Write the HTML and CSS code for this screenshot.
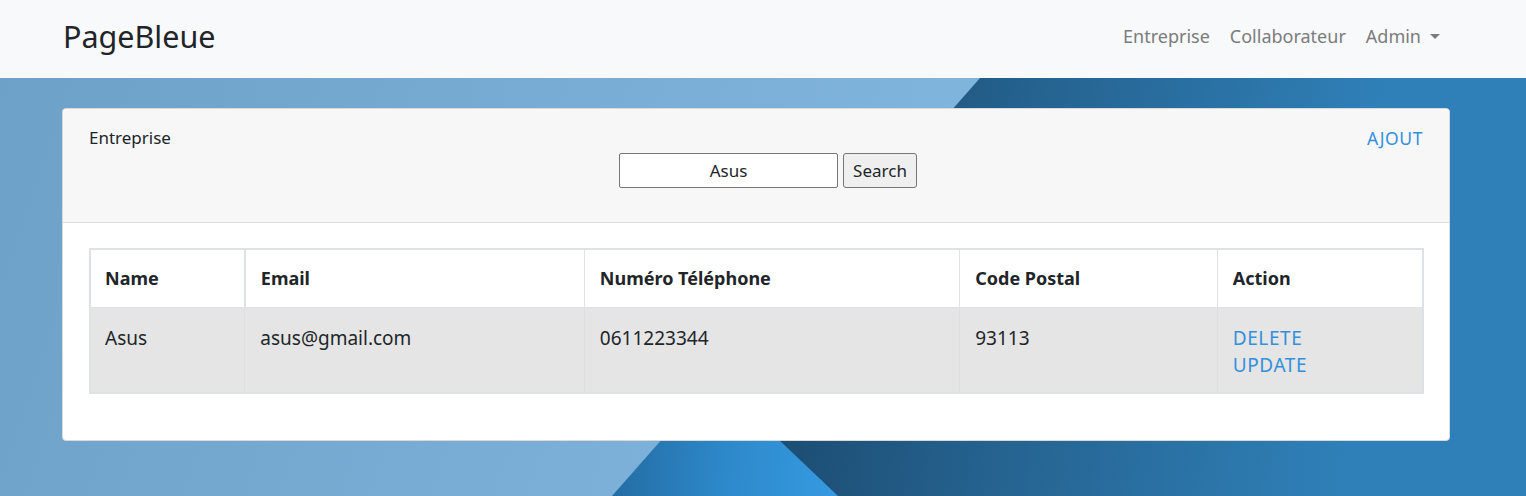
FILE: index.html
```html
<!DOCTYPE html>
<html lang="fr">
<head>
<meta charset="utf-8">
<title>PageBleue</title>
<link rel="stylesheet" href="styles.css">
</head>
<body>
<nav class="navbar">
  <a class="brand" href="#">PageBleue</a>
  <ul class="nav">
    <li><a href="#">Entreprise</a></li>
    <li><a href="#">Collaborateur</a></li>
    <li><a href="#" class="dropdown">Admin<span class="caret"></span></a></li>
  </ul>
</nav>
<main class="main">
  <svg class="bg" viewBox="0 0 1526 418" preserveAspectRatio="none" aria-hidden="true">
    <defs>
      <linearGradient id="gDark" gradientUnits="userSpaceOnUse" x1="840" y1="0" x2="1380" y2="60">
        <stop offset="0" stop-color="#1d4f76"/>
        <stop offset="0.35" stop-color="#25628f"/>
        <stop offset="1" stop-color="#2f80b8"/>
      </linearGradient>
      <linearGradient id="gBright" gradientUnits="userSpaceOnUse" x1="610" y1="400" x2="830" y2="418">
        <stop offset="0" stop-color="#246ca3"/>
        <stop offset="0.5" stop-color="#2d88c9"/>
        <stop offset="1" stop-color="#3599e0"/>
      </linearGradient>
      <linearGradient id="gLight" gradientUnits="userSpaceOnUse" x1="0" y1="0" x2="900" y2="300">
        <stop offset="0" stop-color="#6ea1c7"/>
        <stop offset="1" stop-color="#80b5de"/>
      </linearGradient>
    </defs>
    <rect x="0" y="0" width="1526" height="418" fill="url(#gDark)"/>
    <polygon points="0,0 399,0 838,418 0,418" fill="url(#gBright)"/>
    <polygon points="0,0 980,0 612,418 0,418" fill="url(#gLight)"/>
  </svg>
  <section class="card">
    <header class="card-header">
      <div class="header-row">
        <span class="title">Entreprise</span>
        <a href="#" class="link caps">AJOUT</a>
      </div>
      <form class="search">
        <input type="text" class="search-input" value="Asus">
        <button type="button" class="search-btn">Search</button>
      </form>
    </header>
    <div class="card-body">
      <table class="table">
        <thead>
          <tr>
            <th class="c-name">Name</th>
            <th class="c-email">Email</th>
            <th class="c-tel">Numéro Téléphone</th>
            <th class="c-cp">Code Postal</th>
            <th class="c-act">Action</th>
          </tr>
        </thead>
        <tbody>
          <tr>
            <td>Asus</td>
            <td>asus@gmail.com</td>
            <td>0611223344</td>
            <td>93113</td>
            <td><a href="#" class="link caps block">DELETE</a><a href="#" class="link caps block">UPDATE</a></td>
          </tr>
        </tbody>
      </table>
    </div>
  </section>
</main>
</body>
</html>
```
FILE: styles.css
```css
* { box-sizing: border-box; }
html, body { margin: 0; padding: 0; }
body {
  font-family: "Noto Sans", "Open Sans", sans-serif;
  color: #212529;
  background: #2f80b8;
  width: 1526px;
  height: 496px;
  overflow: hidden;
}
a { text-decoration: none; }

.navbar {
  height: 78px;
  background: #f8f9fa;
  display: flex;
  align-items: center;
  justify-content: space-between;
  padding: 0 86px 0 63px;
}
.brand {
  font-size: 30.5px;
  color: #212529;
  line-height: 1;
  margin-top: -6px;
}
.nav {
  list-style: none;
  display: flex;
  gap: 20px;
  margin: 0;
  padding: 0;
  margin-top: -6px;
}
.nav a {
  color: #7b7c7d;
  font-size: 18px;
}
.dropdown { display: inline-flex; align-items: center; }
.caret {
  display: inline-block;
  margin-left: 9px;
  border-top: 5px solid #7b7c7d;
  border-left: 5.5px solid transparent;
  border-right: 5.5px solid transparent;
  margin-top: 1px;
}

.main {
  position: relative;
  height: 418px;
  padding: 30px 0 0 62px;
}
.bg {
  position: absolute;
  left: 0;
  top: 0;
  width: 1526px;
  height: 418px;
  z-index: 0;
}
.card {
  position: relative;
  z-index: 1;
  width: 1388px;
  height: 333px;
  background: #fff;
  border: 1px solid #d9d9d9;
  border-radius: 4px;
  overflow: hidden;
}
.card-header {
  background: #f7f7f7;
  border-bottom: 1px solid #dcdcdc;
  height: 114px;
  padding: 15px 26px 0 26px;
}
.header-row {
  display: flex;
  justify-content: space-between;
  align-items: center;
  height: 27px;
}
.title { font-size: 17px; color: #212529; }
.link { color: #3490dc; }
.caps { letter-spacing: 0.6px; }
.header-row .link { font-size: 17.5px; }
.search {
  display: flex;
  justify-content: center;
  gap: 5px;
  margin-top: 2px;
  padding-left: 24px;
}
.search-input {
  width: 219px;
  height: 35px;
  border: 1px solid #767676;
  border-radius: 2px;
  background: #fff;
  text-align: center;
  font-family: inherit;
  font-size: 17px;
  color: #212529;
  padding: 0 4px;
}
.search-btn {
  height: 35px;
  width: 74px;
  border: 1px solid #767676;
  border-radius: 3px;
  background: #efefef;
  font-family: inherit;
  font-size: 17px;
  color: #212529;
  padding: 0;
}

.card-body {
  padding: 25px 25px 0 26px;
}
.table {
  width: 1335px;
  border-collapse: collapse;
  border: 2px solid #dee2e6;
  font-size: 19px;
  line-height: 27px;
}
.table th, .table td {
  border: 1px solid #dee2e6;
  padding: 15px 16px 15px 14px;
  text-align: left;
  vertical-align: top;
}
.table td { padding-top: 17px; padding-bottom: 13px; }
.table th {
  font-weight: 700;
  background: #fff;
  font-size: 18px;
}
.table th:first-child { border-right-width: 2px; }
.table tbody tr { background: #e5e5e5; }
.table td { border-color: #dedfe2; }
.table td:not(:first-child), .table th:not(:first-child) { padding-left: 15px; }
.c-name { width: 155px; }
.c-email { width: 340px; }
.c-tel { width: 376px; }
.c-cp { width: 258px; }
.c-act { width: 206px; }
.block { display: block; }
```
